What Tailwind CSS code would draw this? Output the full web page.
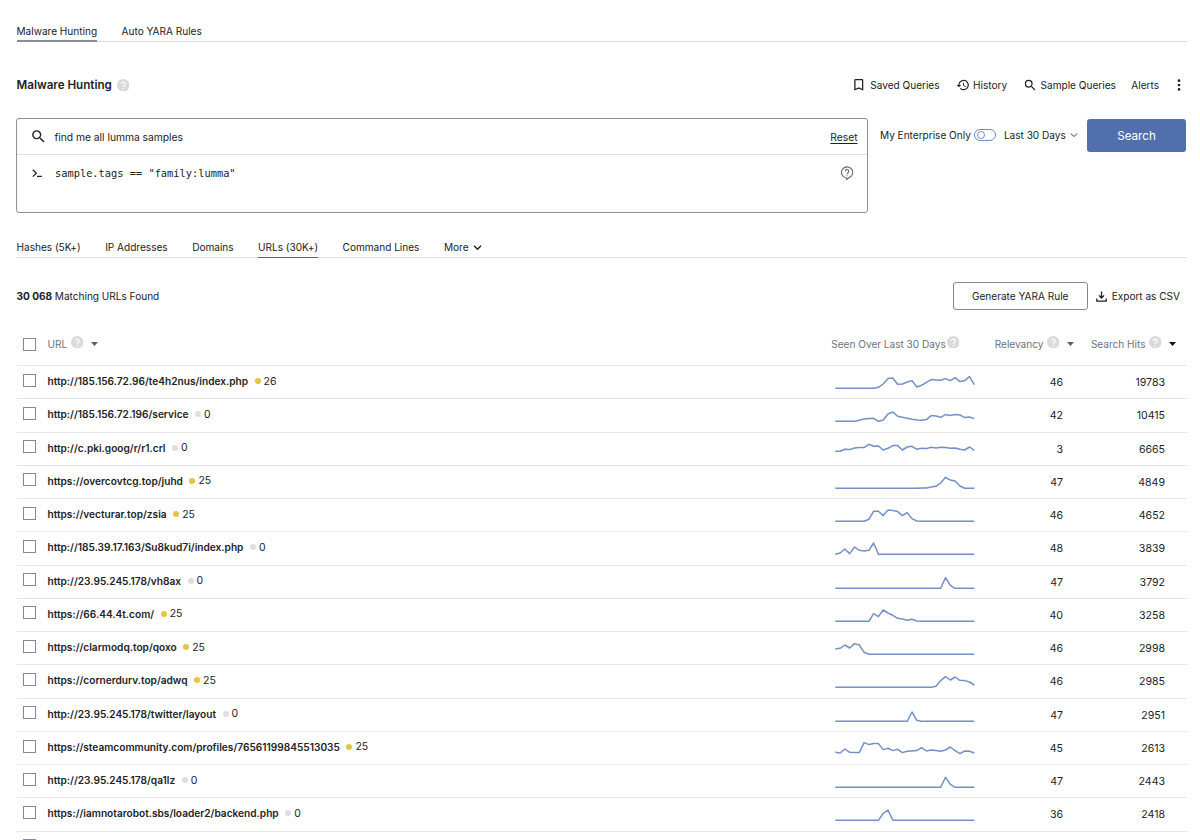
<!DOCTYPE html>
<html lang="en">

<head>
  <meta charset="UTF-8" />
  <meta name="viewport" content="width=device-width, initial-scale=1.0" />
  <title>Malware Hunting</title>
  <script src="https://cdn.jsdelivr.net/npm/@tailwindcss/browser@4"></script>
</head>

<body class="h-[840px] overflow-hidden bg-white font-['Inter',sans-serif] text-[10.1px] leading-4 tracking-[-0.02px] text-[#222226]">
  <!-- Shared icons -->
  <svg class="hidden">
    <symbol id="icon-help" viewBox="0 0 24 24">
      <circle cx="12" cy="12" r="12" fill="#dadada" />
      <path d="M8.400 9.400a3.600 3.600 0 1 1 5.800 2.900c-1.300 1-2.200 1.600-2.200 3.100M12 17.300v2.400" fill="none" stroke="#fff" stroke-width="2.300" />
    </symbol>
    <symbol id="icon-search" viewBox="0 0 24 24">
      <path fill="currentColor" d="M15.500 14h-.79l-.28-.27A6.470 6.470 0 0 0 16 9.500 6.500 6.500 0 1 0 9.500 16c1.610 0 3.090-.59 4.230-1.570l.27.28v.79l5 4.990L20.490 19l-4.990-5zm-6 0C7.010 14 5 11.990 5 9.500S7.010 5 9.500 5 14 7.010 14 9.500 11.990 14 9.500 14z" />
    </symbol>
  </svg>

  <div class="ml-[16.500px] w-[1170px]">
    <!-- Page tabs -->
    <nav class="flex h-[42px] items-end gap-[24.500px] border-b border-[#d9dadd]">
      <a href="#" class="-mb-px h-[19px] whitespace-nowrap border-b-2 border-[#858b97]">Malware Hunting</a>
      <a href="#" class="-mb-px h-[19px] whitespace-nowrap">Auto YARA Rules</a>
    </nav>

    <!-- Title and actions -->
    <header class="mt-[33px] flex h-5 items-center justify-between">
      <div class="flex items-center gap-[5px]">
        <h1 class="text-[11.650px] font-semibold">Malware Hunting</h1>
        <svg class="size-[12.500px]"><use href="#icon-help" /></svg>
      </div>
      <div class="flex items-center">
        <a href="#" class="flex items-center gap-[3.500px]">
          <svg class="size-[15.500px]" viewBox="0 0 24 24" fill="currentColor"><path d="M17 3H7a2 2 0 0 0-2 2v16l7-3 7 3V5a2 2 0 0 0-2-2zm0 15-5-2.180L7 18V5h10v13z" /></svg>
          Saved Queries
        </a>
        <a href="#" class="ml-4 flex items-center gap-[3.500px]">
          <svg class="size-[14px]" viewBox="0 0 24 24" fill="currentColor"><path d="M13 3a9 9 0 0 0-9 9H1l3.890 3.890.07.14L9 12H6a7 7 0 1 1 2.060 4.940l-1.420 1.420A9 9 0 1 0 13 3zm-1 5v5l4.280 2.540.72-1.210-3.500-2.080V8H12z" /></svg>
          History
        </a>
        <a href="#" class="ml-4 flex items-center gap-[3px]">
          <svg class="size-[14.500px]"><use href="#icon-search" /></svg>
          Sample Queries
        </a>
        <a href="#" class="ml-[15.500px]">Alerts</a>
        <svg class="ml-[13px] mr-[.5px] size-[14px]" viewBox="0 0 24 24" fill="currentColor"><circle cx="12" cy="4.500" r="2.300" /><circle cx="12" cy="12" r="2.300" /><circle cx="12" cy="19.500" r="2.300" /></svg>
      </div>
    </header>

    <!-- Query box -->
    <section class="mt-[23px] flex h-[94.500px] items-start">
      <div class="-ml-[.5px] h-[94.500px] w-[851.500px] rounded-[3px] border border-[#8e8f9c]">
        <div class="flex h-[36px] items-center border-b border-[#dfe0e3] pl-[12.500px] pr-[9px]">
          <svg class="size-[17px]"><use href="#icon-search" /></svg>
          <span class="ml-2 text-[10.300px]">find me all lumma samples</span>
          <a href="#" class="ml-auto text-[10.300px] underline underline-offset-2">Reset</a>
        </div>
        <div class="flex h-9 items-center pl-[15px] pr-[12.500px]">
          <svg class="size-[11px]" viewBox="0 0 11 11" fill="none" stroke="currentColor" stroke-width="1.300"><path d="M.8 1.800 4.300 5.200.8 8.600M5 8.400h4.800" /></svg>
          <code class="ml-3 font-['DejaVu_Sans_Mono',monospace] text-[10.350px] tracking-normal">sample.tags == "family:lumma"</code>
          <svg class="ml-auto size-[14px]" viewBox="0 0 14 14" fill="none" stroke="#666871" stroke-width="1.100"><path d="M6.200 12A5.600 5.600 0 1 1 8.500 11.900L6.700 13.700V12ZM5.200 5.300a1.800 1.800 0 1 1 2.900 1.400C7.300 7.300 7 7.500 7 8.200M7 9.200v1" /></svg>
        </div>
      </div>
      <div class="ml-[12.500px] flex h-[34px] items-center whitespace-nowrap">
        <span>My Enterprise Only</span>
        <span class="ml-[3px] flex h-[12px] w-[22px] items-center rounded-full border border-[#6f8cc6] pl-[2px]"><span class="size-[8px] rounded-full border border-[#6f8cc6]"></span></span>
        <span class="ml-[8px]">Last 30 Days</span>
        <svg class="ml-1 size-[8px]" viewBox="0 0 8 8" fill="none" stroke="#44464f" stroke-width="1"><path d="m.7 2.500 3.300 3 3.300-3" /></svg>
      </div>
      <button class="ml-auto mr-[.5px] mt-px h-[33px] w-[99px] rounded-[3px] bg-[#526fad] text-[11.700px] text-white">Search</button>
    </section>

    <!-- Result tabs -->
    <nav class="mt-[26.500px] flex h-[19px] gap-[24.500px] whitespace-nowrap border-b border-[#dfe0e3]">
      <a href="#">Hashes (5K+)</a>
      <a href="#">IP Addresses</a>
      <a href="#">Domains</a>
      <a href="#" class="h-[19px] border-b border-[#596273]">URLs (30K+)</a>
      <a href="#">Command Lines</a>
      <a href="#" class="flex h-4 items-center gap-1">More
        <svg class="size-[9px]" viewBox="0 0 9 9" fill="none" stroke="currentColor" stroke-width="1.400"><path d="m1 2.800 3.500 3.500L8 2.800" /></svg>
      </a>
    </nav>

    <!-- Result count -->
    <div class="mt-[24px] flex h-7 items-center">
      <p><b class="font-bold">30 068</b> Matching URLs Found</p>
      <button class="ml-auto h-7 w-[135px] rounded-[3px] border border-[#858796]">Generate YARA Rule</button>
      <a href="#" class="ml-[8px] mr-[6.500px] flex items-center gap-[5px]">
        <svg class="size-[11px]" viewBox="0 0 11 11" fill="none" stroke="currentColor" stroke-width="1.300"><path d="M5.500.5v6.300M2.900 4.400l2.600 2.600 2.600-2.600M.8 7.600v2.500h9.400V7.600" /></svg>
        Export as CSV
      </a>
    </div>

    <!-- Table header -->
    <div class="flex h-[56px] items-center border-b border-[#e6e7e9] pl-[6px] pt-[13px] text-[#6c7480]">
      <span class="size-[13px] border border-[#85889a]"></span>
      <span class="ml-3">URL</span>
      <svg class="mb-[3px] ml-1 size-[12.500px]"><use href="#icon-help" /></svg>
      <svg class="ml-[7.500px] h-1 w-[7px]" viewBox="0 0 7 4"><path d="M0 0h7L3.500 4z" fill="#555d69" /></svg>
      <span class="ml-auto">Seen Over Last 30 Days</span>
      <svg class="mb-[3px] ml-[1.500px] size-[12.500px]"><use href="#icon-help" /></svg>
      <span class="ml-[35px]">Relevancy</span>
      <svg class="mb-[3px] ml-1 size-[12.500px]"><use href="#icon-help" /></svg>
      <svg class="ml-[7.500px] h-1 w-[7px]" viewBox="0 0 7 4"><path d="M0 0h7L3.500 4z" fill="#555d69" /></svg>
      <span class="ml-[16.500px]">Search Hits</span>
      <svg class="mb-[3px] ml-[3.500px] size-[12.500px]"><use href="#icon-help" /></svg>
      <svg class="ml-[7.500px] mr-[10.500px] h-1 w-[7px]" viewBox="0 0 7 4"><path d="M0 0h7L3.500 4z" fill="#111" /></svg>
    </div>

    <div id="rows"></div>
  </div>

  <script>
    // url, score, relevancy, search hits, index of first trend value, trend (zero elsewhere)
    const rows = [
      ["http://185.156.72.96/te4h2nus/index.php", 26, 46, 19783, 9, [3, 13, 29, 31, 12, 13, 19, 23, 4, 9, 18, 26, 25, 24, 29, 23, 32, 20, 23, 35, 11]],
      ["http://185.156.72.196/service", 0, 42, 10415, 5, [3, 7, 8, 9, 0, 4, 22, 28, 15, 12, 9, 6, 4, 3, 5, 17, 16, 12, 20, 17, 20, 19, 11, 13, 8]],
      ["http://c.pki.goog/r/r1.crl", 0, 3, 6665, 0, [12, 12, 18, 17, 22, 23, 23, 33, 27, 28, 16, 21, 29, 29, 16, 25, 27, 18, 21, 20, 24, 22, 24, 23, 21, 22, 18, 16, 25, 15]],
      ["https://overcovtcg.top/juhd", 25, 47, 4849, 18, [1, 1, 4, 6, 16, 33, 25, 22, 7]],
      ["https://vecturar.top/zsia", 25, 46, 4652, 7, [6, 30, 30, 17, 34, 32, 29, 17, 26, 8, 1]],
      ["http://185.39.17.163/Su8kud7i/index.php", 0, 48, 3839, 0, [0, 4, 16, 2, 22, 12, 10, 12, 34]],
      ["http://23.95.245.178/vh8ax", 0, 47, 3792, 23, [32, 9]],
      ["https://66.44.4t.com/", 25, 40, 3258, 8, [23, 14, 34, 25, 18, 9, 7, 3, 6, 1]],
      ["https://clarmodq.top/qoxo", 25, 46, 2998, 0, [16, 18, 28, 19, 32, 28, 6]],
      ["https://cornerdurv.top/adwq", 25, 46, 2985, 21, [3, 20, 32, 22, 31, 21, 20, 16, 7]],
      ["http://23.95.245.178/twitter/layout", 0, 47, 2951, 16, [28, 3]],
      ["https://steamcommunity.com/profiles/76561199845513035", 25, 45, 2613, 0, [6, 4, 16, 6, 5, 5, 35, 29, 32, 32, 14, 18, 11, 15, 5, 9, 10, 11, 20, 10, 13, 11, 9, 13, 22, 11, 2, 10, 9, 4]],
      ["http://23.95.245.178/qa1lz", 0, 47, 2443, 23, [30, 9]],
      ["https://iamnotarobot.sbs/loader2/backend.php", 0, 36, 2418, 10, [21, 31]],
      ["", 0, "", "", 0, []],
    ];

    function trendPoints(start, values) {
      const points = [];
      for (let i = 0; i < 30; i++) {
        const value = values[i - start] || 0;
        points.push((0.3 + i * 4.793).toFixed(1) + "," + (22.3 - value / 3).toFixed(1));
      }
      return points.join(" ");
    }

    document.getElementById("rows").innerHTML = rows.map(([url, score, relevancy, hits, start, values]) => `
      <div class="flex h-[33.270px] items-start border-b border-[#e6e7e9] pl-[6px]">
        <span class="mt-[7.600px] size-[13px] border border-[#85889a]"></span>
        ${url ? `
        <a href="#" class="ml-3 mt-[7px] text-[10.150px] font-semibold tracking-normal">${url}</a>
        <span class="ml-[6.500px] mt-[12px] size-[6px] rounded-full ${score ? "bg-[#e5c346]" : "bg-[#dedede]"}"></span>
        <span class="ml-[3px] mt-[7.500px] text-[10.500px]">${score}</span>
        <svg class="ml-auto h-8 w-[140px]" viewBox="0 0 140 32" fill="none" stroke="#7490c6" stroke-width="1.500" stroke-linejoin="round"><polyline points="${trendPoints(start, values)}" /></svg>
        <span class="mt-[9px] w-[88px] text-right text-[10.600px]">${relevancy}</span>
        <span class="mr-[21.500px] mt-[9px] w-[102px] text-right text-[10.600px]">${hits}</span>` : ""}
      </div>`).join("");
  </script>
</body>

</html>
